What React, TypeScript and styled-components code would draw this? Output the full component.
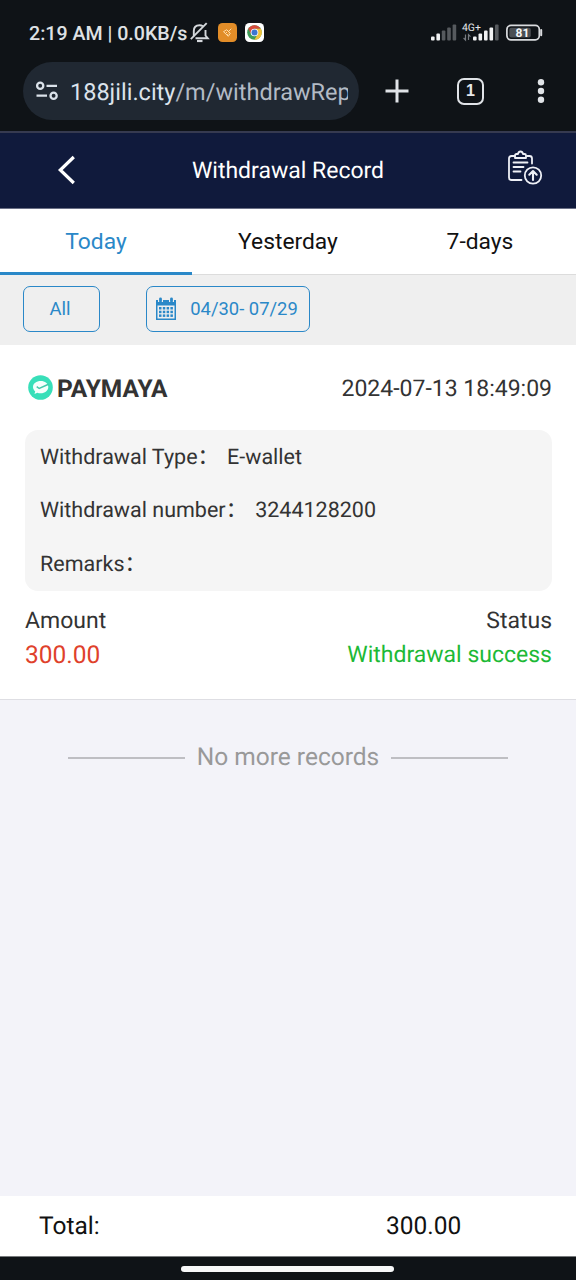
import React from "react";
import styled, { createGlobalStyle } from "styled-components";

const GlobalStyle = createGlobalStyle`
  *, *::before, *::after { box-sizing: border-box; }
  body {
    margin: 0;
    background: #0f1317;
    font-family: Roboto, "Noto Sans CJK SC", sans-serif;
    text-rendering: geometricPrecision;
  }
`;

const Text = styled.span<{ $size: number; $color?: string; $weight?: number }>`
  font-size: ${(p) => p.$size}px;
  line-height: 1.2;
  color: ${(p) => p.$color ?? "#333333"};
  font-weight: ${(p) => p.$weight ?? 400};
  white-space: nowrap;
`;

const Screen = styled.div`
  display: flex;
  flex-direction: column;
  width: 576px;
  height: 1280px;
  overflow: hidden;
  background: #f3f3f9;
`;

const StatusBar = styled.div`
  display: flex;
  align-items: center;
  height: 62px;
  padding: 3px 32px 0 29px;
  background: #0f1317;

  > span {
    width: 159px;
    padding-top: 2px;
  }
`;

const StatusIcons = styled.div`
  display: flex;
  align-items: center;
  margin-left: 2px;
  gap: 8px;
`;

const StatusRight = styled.div`
  margin-left: auto;
  display: flex;
`;

const BrowserBar = styled.div`
  display: flex;
  align-items: flex-start;
  height: 71px;
  padding-left: 23px;
  background: #0f1317;
  border-bottom: 2px solid #363a50;
`;

const UrlPill = styled.div`
  display: flex;
  align-items: center;
  width: 336px;
  height: 58px;
  border-radius: 29px;
  background: #202832;
  padding: 0 11px 0 12px;
  gap: 11px;
`;

const Url = styled.div`
  flex: 1;
  padding-top: 1px;
  overflow: hidden;
  white-space: nowrap;
  font-size: 23.5px;
  line-height: 34px;
  color: #b3bbc5;

  b {
    font-weight: 400;
    color: #dce3ec;
  }
`;

const BrowserActions = styled.div`
  display: flex;
  align-items: center;
  height: 58px;
`;

const IconButton = styled.button<{ $left: number }>`
  display: flex;
  justify-self: start;
  padding: 0;
  margin: 0 0 0 ${(p) => p.$left}px;
  border: 0;
  background: none;
`;

const TabCount = styled.button`
  display: flex;
  align-items: center;
  justify-content: center;
  width: 27px;
  height: 27px;
  margin-left: 48px;
  padding: 0;
  border: 2.5px solid #e0e3e7;
  border-radius: 7px;
  background: none;
`;

const Header = styled.header`
  display: grid;
  grid-template-columns: 1fr auto 1fr;
  align-items: center;
  height: 76px;
  padding: 0 33px 1px;
  background: #101a3c;
  border-bottom: 1px solid #6b7086;
`;

const HeaderEnd = styled.div`
  display: flex;
  justify-content: flex-end;
  padding-bottom: 5px;
`;

const Title = styled.h1`
  margin: 0;
  padding-top: 1px;
  font-size: 23px;
  font-weight: 400;
  line-height: 28px;
  color: #ffffff;
`;

const Tabs = styled.nav`
  display: grid;
  grid-template-columns: repeat(3, 1fr);
  height: 66px;
  background: #ffffff;
`;

const Tab = styled.button<{ $active?: boolean }>`
  border: 0;
  border-bottom: ${(p) => (p.$active ? "3px solid #2a88c8" : "1px solid #dcdcdc")};
  padding: ${(p) => (p.$active ? "2px 0 0" : "0")};
  background: none;
  font-family: inherit;
  font-size: 22.8px;
  line-height: 25px;
  color: ${(p) => (p.$active ? "#2a88c8" : "#111111")};
`;

const Filters = styled.div`
  display: flex;
  gap: 46px;
  height: 70px;
  padding: 11px 23px;
  background: #efefef;
`;

const FilterButton = styled.button<{ $width: number }>`
  display: flex;
  align-items: center;
  justify-content: center;
  gap: 13px;
  width: ${(p) => p.$width}px;
  height: 46px;
  padding: 0 3px 0 0;
  border: 1px solid #2a88c8;
  border-radius: 7px;
  background: none;
  font-family: inherit;
`;

const Record = styled.article`
  height: 355px;
  padding: 26px 24px 0 25px;
  background: #ffffff;
  border-bottom: 1px solid #dedee3;
`;

const RecordHead = styled.div`
  display: flex;
  align-items: center;
  justify-content: space-between;
  height: 34px;
  padding-left: 3px;

  > span {
    padding-top: 2px;
  }
`;

const Wallet = styled.div`
  display: flex;
  align-items: flex-start;
  gap: 4px;
  height: 27px;

  > span {
    line-height: 27px;
  }
`;

const Details = styled.div`
  display: grid;
  grid-template-rows: repeat(3, 53.5px);
  align-items: center;
  height: 161px;
  margin-top: 25px;
  padding: 1px 15px 0;
  border-radius: 13px;
  background: #f5f5f5;
`;

const Detail = styled.div`
  display: flex;
  align-items: center;
  gap: 8px;
`;

const Summary = styled.div`
  display: flex;
  justify-content: space-between;
  padding-top: 15px;
`;

const SummaryColumn = styled.div<{ $end?: boolean }>`
  display: flex;
  flex-direction: column;
  align-items: ${(p) => (p.$end ? "flex-end" : "flex-start")};

  > span {
    height: 34px;
    line-height: 30px;
  }
`;

const Empty = styled.div`
  display: flex;
  align-items: center;
  justify-content: center;
  gap: 12px;
  flex: 1;
  max-height: 115px;

  > span:nth-child(2) {
    padding-bottom: 1px;
  }
`;

const Rule = styled.span`
  width: 117px;
  height: 2px;
  margin-top: 1px;
  background: #bebec3;
`;

const Footer = styled.footer`
  display: grid;
  grid-template-columns: 347px 1fr;
  align-items: center;
  height: 61px;
  margin-top: auto;
  padding: 0 39px;
  background: #ffffff;
  border-bottom: 1px solid #777a7c;
`;

const GestureBar = styled.div`
  height: 23px;
  padding: 9px 0 0 181px;
  background: #0f1317;
`;

const Handle = styled.div`
  width: 213px;
  height: 6px;
  border-radius: 3px;
  background: #f7f8f9;
`;

const MutedBell = () => (
  <svg width="20" height="22" viewBox="0 0 20 22" fill="none" stroke="#d5d8dc" strokeWidth="1.9">
    <path d="M3.8 14.2V9Q3.8 3.2 9.5 3.2Q11.5 3.2 13 4.2M15.5 8V13.5L17.8 16.3H5.5" />
    <path d="M16.7 1.2L0.8 17.2" />
    <path d="M7 19H12.5" strokeWidth="2.2" />
  </svg>
);

const CleanerIcon = () => (
  <svg width="19" height="19" viewBox="0 0 19 19" fill="none">
    <rect width="19" height="19" rx="4.5" fill="#e28d28" />
    <path d="M13.3 5.7L11 8M8.7 6.7L12.3 10.3L10.3 13.3L5.5 8.7Z M7.7 10.2L9 9M9.3 11.8L10.4 10.6" stroke="#ffe0ae" strokeWidth="1" />
  </svg>
);

const ChromeIcon = () => (
  <svg width="19" height="19" viewBox="0 0 19 19">
    <rect width="19" height="19" rx="4.5" fill="#ffffff" />
    <circle cx="9.5" cy="9.5" r="7.3" fill="#3d9b57" />
    <path d="M3.2 5.8A7.3 7.3 0 0 1 15.8 5.8H9.5L6.3 11.2Z" fill="#d84a3c" />
    <path d="M15.8 5.8A7.3 7.3 0 0 1 9.3 16.8L12.7 11.3L9.5 5.8Z" fill="#efc13c" />
    <circle cx="9.5" cy="9.5" r="3.8" fill="#ffffff" />
    <circle cx="9.5" cy="9.5" r="3" fill="#3c75d0" />
  </svg>
);

const dim = "#565a5e";
const lit = "#f1f2f3";

const Signals = () => (
  <svg width="114" height="22" viewBox="0 0 114 22">
    {[4, 7, 10, 13, 16].map((h, i) => (
      <rect key={h} x={1 + i * 5.4} y={18.5 - h} width="3.6" height={h} rx="1" fill={i < 2 ? lit : dim} />
    ))}
    {[4, 7, 10, 13, 16].map((h, i) => (
      <rect key={h} x={43 + i * 5.5} y={18.5 - h} width="3.6" height={h} rx="1" fill={i < 4 ? lit : dim} />
    ))}
    <text x="32" y="8.6" fontSize="10.4" fontFamily="Roboto" fill="#e6e8ea">4G+</text>
    <path d="M35.5 12.5V18L33.6 16M38.5 18V12.7L40.5 14.7" stroke="#777b80" strokeWidth="1.2" fill="none" />
    <rect x="76.9" y="3.4" width="32.4" height="14.4" rx="4" fill="none" stroke="#d9dbde" strokeWidth="1.7" />
    <rect x="79.3" y="5.8" width="21.5" height="9.6" rx="2" fill="#4b4f53" />
    <path d="M111.2 8V13.2" stroke="#d9dbde" strokeWidth="2" strokeLinecap="round" />
    <text x="92.5" y="14.9" fontSize="12" fontWeight="700" fontFamily="Roboto" fill="#f4f5f6" textAnchor="middle">81</text>
  </svg>
);

const SiteSettings = () => (
  <svg width="24" height="22" viewBox="0 0 24 22" fill="none" stroke="#dbe2ea" strokeWidth="2.3">
    <circle cx="5.2" cy="5.8" r="3.1" />
    <path d="M11.5 5.8H22M1.5 15.7H12" />
    <circle cx="18.6" cy="15.7" r="3.1" />
  </svg>
);

const Plus = () => (
  <svg width="24" height="24" viewBox="0 0 24 24" fill="none" stroke="#e0e3e7" strokeWidth="3">
    <path d="M12 0.5V23.5M0.5 12H23.5" />
  </svg>
);

const Dots = () => (
  <svg width="8" height="26" viewBox="0 0 8 26" fill="#e0e3e7">
    <circle cx="4" cy="4.2" r="3.2" />
    <circle cx="4" cy="13" r="3.2" />
    <circle cx="4" cy="21.8" r="3.2" />
  </svg>
);

const Back = () => (
  <svg width="19" height="30" viewBox="0 0 19 30" fill="none" stroke="#ffffff" strokeWidth="3.2">
    <path d="M16.8 2L3.3 15L16.8 28" />
  </svg>
);

const SubmitReport = () => (
  <svg width="36" height="36" viewBox="0 0 36 36" fill="none" stroke="#eef0f6" strokeWidth="1.8" strokeLinecap="round" strokeLinejoin="round">
    <path d="M7.5 6H4.5Q2 6 2 8.5V27.5Q2 30 4.5 30H14.5M20 6H22.5Q25 6 25 8.5V13.5" />
    <path d="M8 8V5.5Q8 4 9.5 4H11Q11.5 1.5 13.5 1.5Q15.5 1.5 16 4H17.5Q19 4 19 5.5V8Z" />
    <path d="M6.5 12.5H20.5M6.5 17H16.5M6.5 21.5H13.5" />
    <circle cx="26" cy="25.5" r="8.2" />
    <path d="M26 30V21.5M22.3 24.7L26 21L29.7 24.7" strokeWidth="2.1" />
  </svg>
);

const Calendar = () => (
  <svg width="22" height="24" viewBox="0 0 22 24">
    <path d="M1 3H21V23H1Z" fill="#2a88c8" />
    <rect x="2.5" y="8.5" width="17" height="13" fill="#efefef" />
    <path d="M5.5 0V5M16.5 0V5" stroke="#efefef" strokeWidth="5" />
    <path d="M5.5 1.8V4.3M16.5 1.8V4.3" stroke="#2a88c8" strokeWidth="2.8" strokeLinecap="round" />
    {[10, 13.7, 17.4].map((y) =>
      [4, 7.8, 11.6, 15.4].map((x) => (
        <rect key={`${x}-${y}`} x={x} y={y} width="2.5" height="2.5" fill="#2a88c8" />
      ))
    )}
  </svg>
);

const WalletLogo = () => (
  <svg width="25" height="25" viewBox="0 0 25 25">
    <circle cx="12.5" cy="12.5" r="12.3" fill="#38dfb9" />
    <path d="M5 12C5 8.5 8.5 6 12.7 6C17 6 20.3 8.5 20.3 12C20.3 15.7 16.9 18.3 12.7 18.3C11.4 18.3 10.3 18.1 9.3 17.7L6.5 18.9L7.2 16.3C5.8 15.2 5 13.7 5 12Z" fill="#f5fffc" />
    <path d="M8.7 11.6L11.2 13.5L20.5 9.3" fill="none" stroke="#45c9aa" strokeWidth="1.5" />
  </svg>
);

const details = [
  { label: "Withdrawal Type", value: "E-wallet" },
  { label: "Withdrawal number", value: "3244128200" },
  { label: "Remarks", value: "" },
];

export default function App() {
  return (
    <Screen>
      <GlobalStyle />
      <StatusBar>
        <Text $size={19.6} $weight={500} $color="#dfe1e4">2:19 AM | 0.0KB/s</Text>
        <StatusIcons>
          <MutedBell />
          <CleanerIcon />
          <ChromeIcon />
        </StatusIcons>
        <StatusRight>
          <Signals />
        </StatusRight>
      </StatusBar>
      <BrowserBar>
        <UrlPill>
          <SiteSettings />
          <Url><b>188jili.city</b>/m/withdrawRep</Url>
        </UrlPill>
        <BrowserActions>
          <IconButton $left={26} aria-label="New tab"><Plus /></IconButton>
          <TabCount aria-label="Open tabs">
            <Text $size={16} $weight={700} $color="#e6e8eb">1</Text>
          </TabCount>
          <IconButton $left={53} aria-label="Menu"><Dots /></IconButton>
        </BrowserActions>
      </BrowserBar>
      <Header>
        <IconButton $left={24} aria-label="Back"><Back /></IconButton>
        <Title>Withdrawal Record</Title>
        <HeaderEnd><SubmitReport /></HeaderEnd>
      </Header>
      <Tabs>
        <Tab $active>Today</Tab>
        <Tab>Yesterday</Tab>
        <Tab>7-days</Tab>
      </Tabs>
      <Filters>
        <FilterButton $width={77}>
          <Text $size={18.5} $color="#2a88c8">All</Text>
        </FilterButton>
        <FilterButton $width={164}>
          <Calendar />
          <Text $size={18.4} $color="#2a88c8">04/30- 07/29</Text>
        </FilterButton>
      </Filters>
      <Record>
        <RecordHead>
          <Wallet>
            <WalletLogo />
            <Text $size={24.5} $weight={700}>PAYMAYA</Text>
          </Wallet>
          <Text $size={23}>2024-07-13 18:49:09</Text>
        </RecordHead>
        <Details>
          {details.map((d) => (
            <Detail key={d.label}>
              <Text $size={21.5}>{d.label}：</Text>
              <Text $size={21.5}>{d.value}</Text>
            </Detail>
          ))}
        </Details>
        <Summary>
          <SummaryColumn>
            <Text $size={23}>Amount</Text>
            <Text $size={24.5} $color="#df412b">300.00</Text>
          </SummaryColumn>
          <SummaryColumn $end>
            <Text $size={23}>Status</Text>
            <Text $size={23} $color="#1db936">Withdrawal success</Text>
          </SummaryColumn>
        </Summary>
      </Record>
      <Empty>
        <Rule />
        <Text $size={24.5} $color="#999999">No more records</Text>
        <Rule />
      </Empty>
      <Footer>
        <Text $size={24.5} $color="#111111">Total:</Text>
        <Text $size={24.5} $color="#111111">300.00</Text>
      </Footer>
      <GestureBar>
        <Handle />
      </GestureBar>
    </Screen>
  );
}
